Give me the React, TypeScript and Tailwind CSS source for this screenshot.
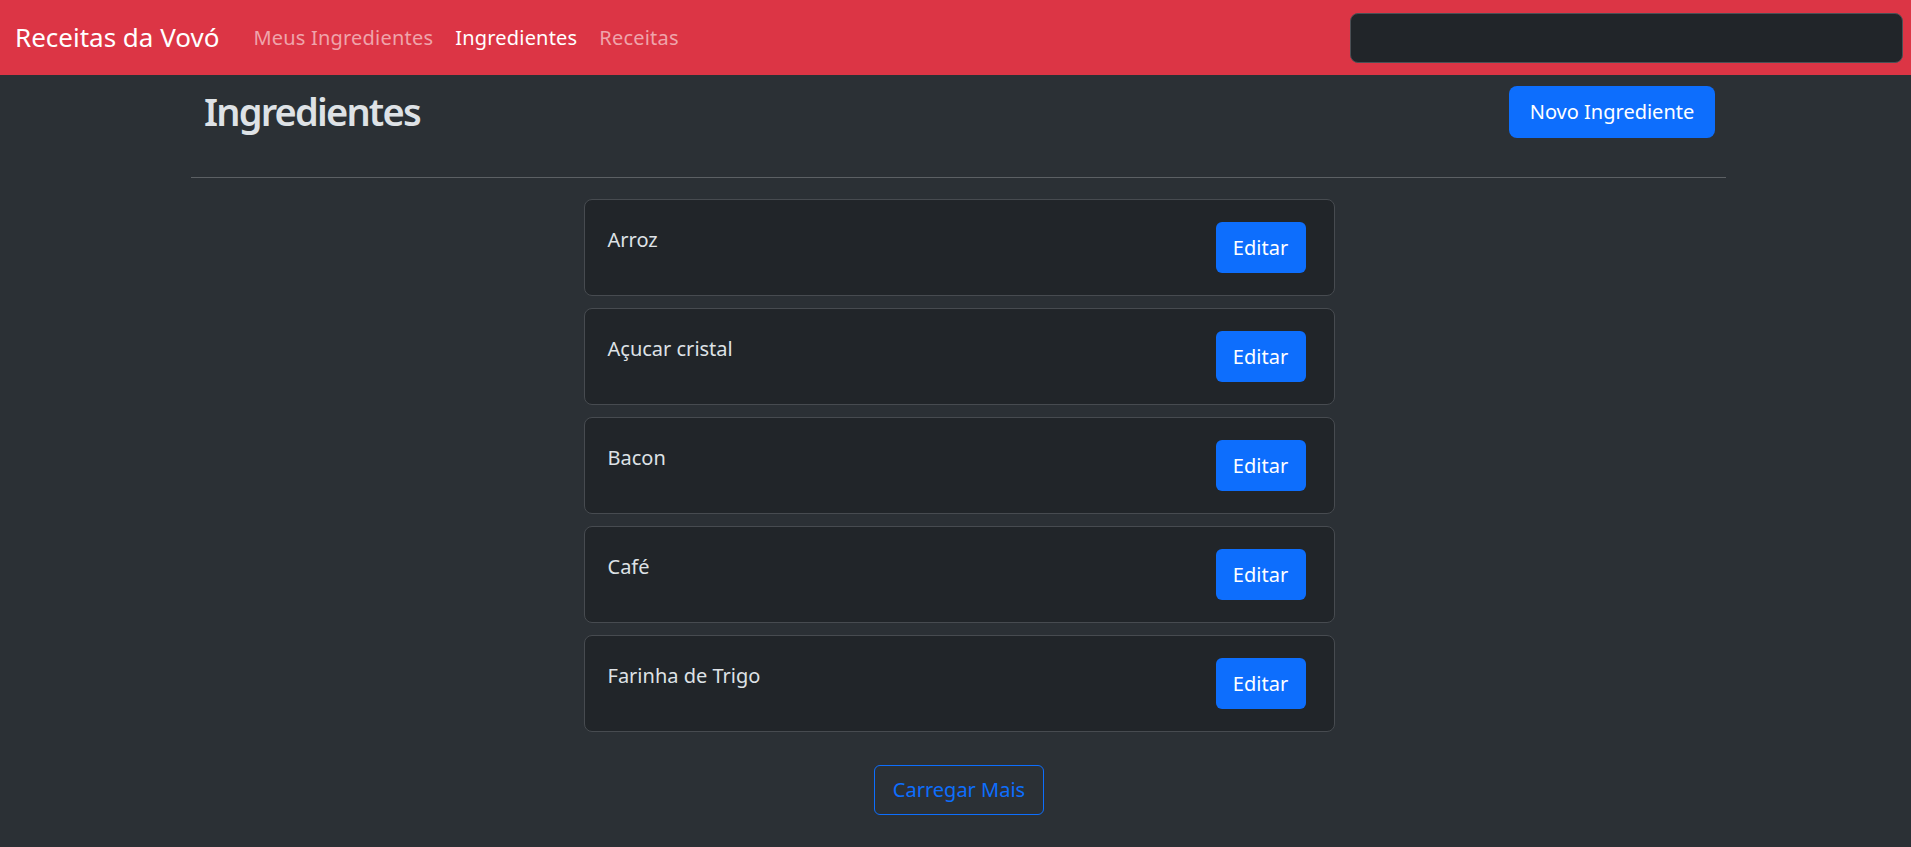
import React from "react";

const items = ["Arroz", "Açucar cristal", "Bacon", "Café", "Farinha de Trigo"];

export default function App() {
  return (
    <div
      className="min-h-screen w-full bg-[#2b3035] text-[#dee2e6]"
      style={{ fontFamily: '"Noto Sans", "Open Sans", sans-serif' }}
    >
      <nav className="flex h-[75px] items-center bg-[#dc3545] pl-[15px] pr-[8px]">
        <a className="mr-[23px] text-[26px] leading-[37px] text-white">Receitas da Vovó</a>
        <div className="flex items-center text-[20px] leading-[30px] tracking-[0.2px]">
          <a className="px-[11px] text-[#efa4ab]">Meus Ingredientes</a>
          <a className="px-[11px] text-white">Ingredientes</a>
          <a className="px-[11px] text-[#efa4ab]">Receitas</a>
        </div>
        <div className="ml-auto">
          <input
            className="h-[50px] w-[553px] rounded-[8px] border border-[#4b5055] bg-[#212529] outline-none"
            aria-label="Buscar"
          />
        </div>
      </nav>

      <div className="ml-[191px] w-[1535px] pt-[11px]">
        <div className="flex h-[70px] items-start justify-between pl-[13px] pr-[11px]">
          <h2 className="pt-[1px] text-[38px] font-semibold leading-[48px] tracking-[-1.8px] text-[#dee2e6]">Ingredientes</h2>
          <button className="flex h-[52px] w-[206px] items-center justify-center rounded-[8px] bg-[#0d6efd] text-[20px] text-white">
            Novo Ingrediente
          </button>
        </div>
        <hr className="mt-[21px] border-0 border-t border-[#5c6064]" />
      </div>

      <div className="mt-[21px] flex flex-col items-center pl-[7px]">
        <div className="flex w-[751px] flex-col gap-[12px]">
          {items.map((name) => (
            <div
              key={name}
              className="flex h-[97px] items-center justify-between rounded-[8px] border border-[#474b50] bg-[#212529] pl-[23px] pr-[28px]"
            >
              <div className="self-start pt-[25px] text-[20px] leading-[30px] text-[#dee2e6]">{name}</div>
              <button className="flex h-[51px] w-[90px] items-center justify-center rounded-[6px] bg-[#0d6efd] text-[20px] text-white">
                Editar
              </button>
            </div>
          ))}
        </div>
        <button className="mt-[33px] flex h-[50px] w-[170px] items-center justify-center rounded-[6px] border border-[#0d6efd] text-[20px] text-[#0d6efd]">
          Carregar Mais
        </button>
      </div>
    </div>
  );
}
